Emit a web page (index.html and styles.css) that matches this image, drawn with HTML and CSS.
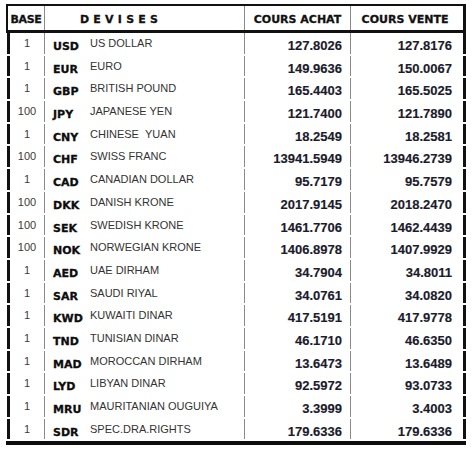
FILE: index.html
```html
<!DOCTYPE html>
<html>
<head>
<meta charset="utf-8">
<link rel="stylesheet" href="styles.css">
</head>
<body>
<div class="sheet">
  <div class="head">
    <div class="h-base">BASE</div>
    <div class="h-dev">D E V I S E S</div>
    <div class="h-achat">COURS ACHAT</div>
    <div class="h-vente">COURS VENTE</div>
  </div>
  <div class="rows">
    <div class="row"><div class="base">1</div><div class="code">USD</div><div class="name">US DOLLAR</div><div class="num achat">127.8026</div><div class="num vente">127.8176</div></div>
    <div class="row"><div class="base">1</div><div class="code">EUR</div><div class="name">EURO</div><div class="num achat">149.9636</div><div class="num vente">150.0067</div></div>
    <div class="row"><div class="base">1</div><div class="code">GBP</div><div class="name">BRITISH POUND</div><div class="num achat">165.4403</div><div class="num vente">165.5025</div></div>
    <div class="row"><div class="base">100</div><div class="code">JPY</div><div class="name">JAPANESE YEN</div><div class="num achat">121.7400</div><div class="num vente">121.7890</div></div>
    <div class="row"><div class="base">1</div><div class="code">CNY</div><div class="name">CHINESE &nbsp;YUAN</div><div class="num achat">18.2549</div><div class="num vente">18.2581</div></div>
    <div class="row"><div class="base">100</div><div class="code">CHF</div><div class="name">SWISS FRANC</div><div class="num achat">13941.5949</div><div class="num vente">13946.2739</div></div>
    <div class="row"><div class="base">1</div><div class="code">CAD</div><div class="name">CANADIAN DOLLAR</div><div class="num achat">95.7179</div><div class="num vente">95.7579</div></div>
    <div class="row"><div class="base">100</div><div class="code">DKK</div><div class="name">DANISH KRONE</div><div class="num achat">2017.9145</div><div class="num vente">2018.2470</div></div>
    <div class="row"><div class="base">100</div><div class="code">SEK</div><div class="name">SWEDISH KRONE</div><div class="num achat">1461.7706</div><div class="num vente">1462.4439</div></div>
    <div class="row"><div class="base">100</div><div class="code">NOK</div><div class="name">NORWEGIAN KRONE</div><div class="num achat">1406.8978</div><div class="num vente">1407.9929</div></div>
    <div class="row"><div class="base">1</div><div class="code">AED</div><div class="name">UAE DIRHAM</div><div class="num achat">34.7904</div><div class="num vente">34.8011</div></div>
    <div class="row"><div class="base">1</div><div class="code">SAR</div><div class="name">SAUDI RIYAL</div><div class="num achat">34.0761</div><div class="num vente">34.0820</div></div>
    <div class="row"><div class="base">1</div><div class="code">KWD</div><div class="name">KUWAITI DINAR</div><div class="num achat">417.5191</div><div class="num vente">417.9778</div></div>
    <div class="row"><div class="base">1</div><div class="code">TND</div><div class="name">TUNISIAN DINAR</div><div class="num achat">46.1710</div><div class="num vente">46.6350</div></div>
    <div class="row"><div class="base">1</div><div class="code">MAD</div><div class="name">MOROCCAN DIRHAM</div><div class="num achat">13.6473</div><div class="num vente">13.6489</div></div>
    <div class="row"><div class="base">1</div><div class="code">LYD</div><div class="name">LIBYAN DINAR</div><div class="num achat">92.5972</div><div class="num vente">93.0733</div></div>
    <div class="row"><div class="base">1</div><div class="code">MRU</div><div class="name">MAURITANIAN OUGUIYA</div><div class="num achat">3.3999</div><div class="num vente">3.4003</div></div>
    <div class="row"><div class="base">1</div><div class="code">SDR</div><div class="name">SPEC.DRA.RIGHTS</div><div class="num achat">179.6336</div><div class="num vente">179.6336</div></div>
  </div>
  <div class="bottom"></div>
</div>
</body>
</html>
```

FILE: styles.css
```css
html, body {
  margin: 0;
  padding: 0;
  background: #ffffff;
}

.sheet {
  margin: 4px 0 0 6px;
  width: 460px;
}

.head {
  box-sizing: border-box;
  width: 460px;
  height: 29px;
  border-top: 2px solid #111;
  border-left: 2px solid #111;
  border-right: 3px solid #111;
  border-bottom: 3px solid #111;
  display: grid;
  grid-template-columns: 37px 200px 106px 112px;
  font-family: "DejaVu Sans", sans-serif;
  font-weight: bold;
  font-size: 11px;
  line-height: 11px;
  color: #111;
  -webkit-text-stroke: 0.3px #111;
}

.head > div {
  padding-top: 8px;
  white-space: nowrap;
}

.h-base {
  border-right: 1px solid #8a8a8a;
  text-align: center;
  letter-spacing: -0.3px;
}

.h-dev {
  border-right: 1px solid #8a8a8a;
  padding-left: 35px;
  letter-spacing: 0.2px;
}

.h-achat {
  border-right: 1px solid #8a8a8a;
  text-align: center;
}

.h-vente {
  text-align: center;
  padding-right: 4px;
}

.rows {
  display: flex;
  flex-direction: column;
  gap: 2px;
  margin-left: 1px;
}

.row {
  height: 20.7px;
  border-left: 3px solid #111;
  border-right: 3px solid #111;
  display: grid;
  grid-template-columns: 35px 45px 155px 106px 112px;
  white-space: nowrap;
}

.base {
  border-right: 1px solid #8a8a8a;
  text-align: center;
  font-family: "Liberation Sans", Arial, sans-serif;
  font-size: 11px;
  line-height: 11px;
  padding-top: 5px;
  color: #3a3a3a;
}

.code {
  font-family: "DejaVu Sans", sans-serif;
  font-weight: bold;
  font-size: 11px;
  line-height: 11px;
  padding-top: 8px;
  padding-left: 8px;
  color: #0d0d0d;
  -webkit-text-stroke: 0.3px #0d0d0d;
}

.name {
  border-right: 1px solid #8a8a8a;
  font-family: "Liberation Sans", Arial, sans-serif;
  font-size: 11px;
  line-height: 11px;
  padding-top: 5px;
  color: #333333;
}

.num {
  font-family: "Liberation Sans", Arial, sans-serif;
  font-weight: bold;
  font-size: 13px;
  line-height: 13px;
  padding-top: 6px;
  text-align: right;
  color: #1b1b2c;
  -webkit-text-stroke: 0.15px #1b1b2c;
}

.achat {
  border-right: 1px solid #8a8a8a;
  padding-right: 8px;
}

.vente {
  padding-right: 11px;
}

.bottom {
  margin-top: 2px;
  height: 4px;
  width: 460px;
  background: #0d0d0d;
}
```
